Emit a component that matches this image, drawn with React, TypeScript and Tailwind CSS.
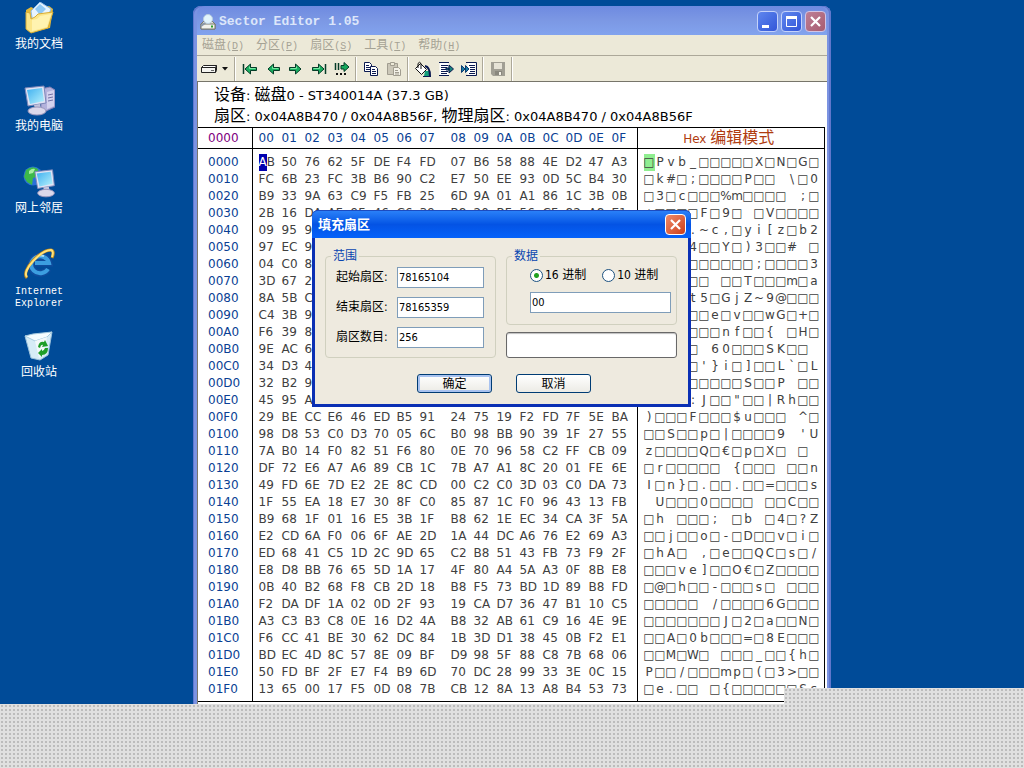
import { Fragment, type ReactNode } from "react";

const ROWS = [
  "AB 50 76 62 5F DE F4 FD 07 B6 58 88 4E D2 47 A3",
  "FC 6B 23 FC 3B B6 90 C2 E7 50 EE 93 0D 5C B4 30",
  "B9 33 9A 63 C9 F5 FB 25 6D 9A 01 A1 86 1C 3B 0B",
  "2B 16 DA AF 9F 46 C6 39 B8 20 BF 56 CF 82 A8 E1",
  "09 95 9E A1 2E 7E 63 2C F1 79 69 5B 7A E0 62 32",
  "97 EC 9B C4 34 B1 D3 59 E8 29 33 FA 92 23 20 C1",
  "04 C0 8D E2 F5 A6 C3 D8 B7 FE 3B A9 E4 C5 D1 33",
  "3D 67 26 B4 C8 A9 20 D6 F3 54 B7 DC E1 6D A5 61",
  "8A 5B C1 AE 74 35 B9 47 6A 5A 7E 39 40 F7 D5 B3",
  "C4 3B 9D E3 A2 C6 65 D8 76 F9 A4 77 47 B3 2B C9",
  "F6 39 8C D1 B5 E7 F2 6E 66 C8 A6 7B 20 D4 48 E9",
  "9E AC 6F B1 D7 20 36 30 C5 E8 A3 53 4B F6 B9 20",
  "34 D3 4E C2 A8 27 7D 69 E4 5D B7 F1 4C 60 C6 4C",
  "32 B2 9F A5 D9 E6 B3 C7 F8 53 A1 D4 50 20 E2 B6",
  "45 95 A3 C8 3A 4A D5 F7 22 B9 E1 7C 52 68 A4 D6",
  "29 BE CC E6 46 ED B5 91 24 75 19 F2 FD 7F 5E BA",
  "98 D8 53 C0 D3 70 05 6C B0 98 BB 90 39 1F 27 55",
  "7A B0 14 F0 82 51 F6 80 0E 70 96 58 C2 FF CB 09",
  "DF 72 E6 A7 A6 89 CB 1C 7B A7 A1 8C 20 01 FE 6E",
  "49 FD 6E 7D E2 2E 8C CD 00 C2 C0 3D 03 C0 DA 73",
  "1F 55 EA 18 E7 30 8F C0 85 87 1C F0 96 43 13 FB",
  "B9 68 1F 01 16 E5 3B 1F B8 62 1E EC 34 CA 3F 5A",
  "E2 CD 6A F0 06 6F AE 2D 1A 44 DC A6 76 E2 69 A3",
  "ED 68 41 C5 1D 2C 9D 65 C2 B8 51 43 FB 73 F9 2F",
  "E8 D8 BB 76 65 5D 1A 17 4F 80 A4 5A A3 0F 8B E8",
  "0B 40 B2 68 F8 CB 2D 18 B8 F5 73 BD 1D 89 B8 FD",
  "F2 DA DF 1A 02 0D 2F 93 19 CA D7 36 47 B1 10 C5",
  "A3 C3 B3 C8 0E 16 D2 4A B8 32 AB 61 C9 16 4E 9E",
  "F6 CC 41 BE 30 62 DC 84 1B 3D D1 38 45 0B F2 E1",
  "BD EC 4D 8C 57 8E 09 BF D9 98 5F 88 C8 7B 68 06",
  "50 FD BF 2F E7 F4 B9 6D 70 DC 28 99 33 3E 0C 15",
  "13 65 00 17 F5 0D 08 7B CB 12 8A 13 A8 B4 53 73",
];

// one text string per row, one character per byte
const TEXT = [
  "□Pvb_□□□□□X□N□G□",
  "□k#□;□□□□P□□ \\□0",
  "□3□c□□□%m□□□□ ;□",
  "+□□□□F□9□ □V□□□□",
  " □□□.~c,□yi[z□b2",
  "□□□□4□□Y□)3□□# □",
  "□□□□□□□□□□;□□□□3",
  "=g&□□□ □□T□□□m□a",
  "□[□□t5□GjZ~9@□□□",
  "□;□□□□e□v□□wG□+□",
  "□9□□□□□nf□□{ □H□",
  "□□o□□ 60□□□SK□□ ",
  "4□N□□'}i□]□□L`□L",
  "2□□□□□□□□S□□P □□",
  "E□□□:J□□\"□□|Rh□□",
  ")□□□F□□□$u□□□ ^□",
  "□□S□□p□|□□□□9 'U",
  "z□□□□Q□€□p□X□ □ ",
  "□r□□□□□ {□□□ □□n",
  "I□n}□.□□.□□=□□□s",
  " U□□□0□□□□ □□C□□",
  "□h □□□; □b □4□?Z",
  "□□j□□o□-□D□□v□i□",
  "□hA□ ,□e□□QC□s□/",
  "□□□ve]□□O€□Z□□□□",
  "□@□h□□-□□□s□ □□□",
  "□□□□□ /□□□□6G□□□",
  "□□□□□□□J□2□a□□N□",
  "□□A□0b□□□=□8E□□□",
  "□□M□W□ □□□_□□{h□",
  "P□□/□□□mp□(□3>□□",
  "□e.□□ □{□□□□□□Ss",
];

const COLUMNS = "00 01 02 03 04 05 06 07 08 09 0A 0B 0C 0D 0E 0F";

const MENUS = [
  ["磁盘", "D"],
  ["分区", "P"],
  ["扇区", "S"],
  ["工具", "T"],
  ["帮助", "H"],
];

function Bytes({ value, cursor = false }: { value: string; cursor?: boolean }) {
  const bytes = value.split(" ");
  return (
    <div className="flex gap-2">
      {[bytes.slice(0, 8), bytes.slice(8)].map((half, h) => (
        <div key={h} className="flex">
          {half.map((byte, i) => (
            <span key={i} className="w-[23px]">
              {cursor && h === 0 && i === 0 ? (
                <>
                  <span className="inline-block bg-[#0000b0] text-white">{byte[0]}</span>
                  {byte[1]}
                </>
              ) : (
                byte
              )}
            </span>
          ))}
        </div>
      ))}
    </div>
  );
}

function HexTable() {
  return (
    <div className="mr-[2px]">
      <table className="w-full table-fixed border-collapse border-b border-black text-xs leading-[17px]">
        <colgroup>
          <col className="w-[54px]" />
          <col className="w-[385px]" />
          <col />
        </colgroup>
        <thead>
          <tr className="h-[21px] border-y border-black text-[#0a3f94]">
            <th className="border-r border-black p-0 pl-[10px] text-left font-normal text-[#800080]">
              0000
            </th>
            <th className="border-r border-black p-0 pl-[6px] text-left font-normal">
              <Bytes value={COLUMNS} />
            </th>
            <th className="border-r border-black p-0 pr-1 text-center font-normal text-[#b03c10]">
              Hex <span className="text-base leading-[17px]">编辑模式</span>
            </th>
          </tr>
        </thead>
        <tbody className="text-[#404040]">
          {ROWS.map((row, r) => (
            <tr
              key={r}
              className="h-[17px] first:h-[22px] first:align-bottom last:h-[21px] last:align-top"
            >
              <th
                scope="row"
                className="border-r border-black p-0 pl-[10px] text-left align-[inherit] font-normal text-[#0a3f94]"
              >
                {(r * 16).toString(16).toUpperCase().padStart(4, "0")}
              </th>
              <td className="border-r border-black p-0 pl-[6px] align-[inherit]">
                <Bytes value={row} cursor={r === 0} />
              </td>
              <td className="border-r border-black p-0 pl-[6px] align-[inherit]">
                <div className="flex">
                  {[...TEXT[r]].map((char, i) => (
                    <span
                      key={i}
                      className={
                        r === 0 && i === 0
                          ? "flex w-[11px] justify-center bg-[#90ee90]"
                          : "flex w-[11px] justify-center"
                      }
                    >
                      {char}
                    </span>
                  ))}
                </div>
              </td>
            </tr>
          ))}
        </tbody>
      </table>
    </div>
  );
}

/* ---------- toolbar ---------- */

function Arrow({ bar, flip = false }: { bar?: boolean; flip?: boolean }) {
  return (
    <svg width="16" height="16" viewBox="0 0 16 16">
      <g transform={flip ? "translate(16 0) scale(-1 1)" : undefined}>
        <path d="M1.500 6.500h6V3l5.500 5-5.500 5V9.500h-6z" fill="#18b060" stroke="#053c28" />
        <path d="M2.500 7.500h6V5.500" fill="none" stroke="#7be8a4" />
        {bar && <path d="M14.500 3v10" stroke="#053c28" strokeWidth="1.500" />}
      </g>
    </svg>
  );
}

const driveIcon = (
  <svg width="18" height="12" viewBox="0 0 18 12">
    <path d="M1.500 4.500l2-2h13l-1 2z" fill="#fff" stroke="#222" />
    <path d="M1.500 4.500h14v5h-14z" fill="#f4f4f0" stroke="#222" />
    <path d="M15.500 9.500l1-2v-5" fill="none" stroke="#222" />
    <path d="M11 7.500h3" stroke="#666" />
  </svg>
);

const gotoIcon = (
  <svg width="16" height="16" viewBox="0 0 16 16">
    <path d="M1.500 2v7M4.500 2v7" stroke="#053c28" strokeWidth="1.500" />
    <path d="M7 4.500h3V1.500L15 6l-5 4.500V8H7z" fill="#18a85c" stroke="#053c28" />
    <path d="M2 13h2M6 13h2M10 13h2" stroke="#111" strokeWidth="2" />
  </svg>
);

const copyIcon = (
  <svg width="16" height="16" viewBox="0 0 16 16" stroke="#0b1a50">
    <path d="M1.500 1.500h5l2 2v7h-7z" fill="#fff" />
    <path d="M3 4.500h3M3 6.500h4M3 8.500h4" />
    <path d="M7.500 5.500h5l2 2v7h-7z" fill="#fff" />
    <path d="M9 8.500h3M9 10.500h4M9 12.500h4" />
  </svg>
);

const pasteIcon = (
  <svg width="16" height="16" viewBox="0 0 16 16" stroke="#a19d90">
    <path d="M1.500 2.500h10v11h-10z" fill="#cbc7b8" />
    <path d="M4.500 1.500h4v3h-4z" fill="#ece9d8" />
    <path d="M7.500 6.500h5l2 2v6h-7z" fill="#f4f2e8" />
    <path d="M9 9.500h3M9 11.500h4M9 13h4" />
  </svg>
);

const fillIcon = (
  <svg width="18" height="16" viewBox="0 0 18 16">
    <path d="M1.500 7.500l5-5 6 6-5 5z" fill="#fff" stroke="#111" />
    <path d="M4 7V2.500q1.500-2.500 3 0V8" fill="none" stroke="#111" />
    <path d="M11 10h4v5h-5z" fill="#16a07c" />
    <path d="M11 5q5 1 5 10" fill="none" stroke="#0b1a50" strokeWidth="2" />
    <path d="M9 15.500h8" stroke="#0b1a50" />
  </svg>
);

const exportIcon = (
  <svg width="16" height="16" viewBox="0 0 16 16">
    <path d="M1.500 1.500h9v13h-9z" fill="#fff" />
    <path
      d="M1 1.500h10M1 14.500h10M3 4.500h7M3 6.500h6M3 8.500h6M3 10.500h7M3 12.500h6"
      stroke="#0b1a50"
    />
    <path d="M11 4l4.500 4-4.500 4zM8 7h3v2H8z" fill="#16827c" stroke="#0b1a50" />
  </svg>
);

const importIcon = (
  <svg width="16" height="16" viewBox="0 0 16 16">
    <path d="M6.500 1.500h8v13h-8z" fill="#fff" />
    <path
      d="M5 1.500h10.500v13H5M8 4.500h6M9 6.500h5M9 8.500h5M9 10.500h5M8 12.500h6"
      fill="none"
      stroke="#0b1a50"
    />
    <path d="M.5 4.500L4 8l-3.500 3.500zM4.500 4.500L8 8l-3.500 3.500z" fill="#167aa0" stroke="#0b3a70" />
  </svg>
);

const saveIcon = (
  <svg width="16" height="16" viewBox="0 0 16 16">
    <path d="M1 1h14v14H3l-2-2z" fill="#a19f94" />
    <path d="M4 2h8v6H4z" fill="#e6e3d6" />
    <path d="M5 10h7v4H5z" fill="#8a887e" />
    <path d="M9 11h2v3H9z" fill="#f4f2e8" />
  </svg>
);

function ToolButton({ label, children }: { label: string; children: ReactNode }) {
  return (
    <button aria-label={label} className="flex h-6 w-[23px] items-center justify-center">
      {children}
    </button>
  );
}

function Separator() {
  return (
    <span className="mx-[2px] h-6 w-[2px] border-l border-r border-l-[#aca899] border-r-white" />
  );
}

function Toolbar() {
  return (
    <div className="flex h-[26px] items-center border-b border-[#77756a]">
      <button aria-label="选择磁盘" className="flex h-6 w-[35px] items-center gap-1 pl-[3px]">
        {driveIcon}
        <svg width="6" height="4" viewBox="0 0 6 4">
          <path d="M0 0h6L3 3.500z" fill="#111" />
        </svg>
      </button>
      <Separator />
      <ToolButton label="第一扇区"><Arrow bar flip /></ToolButton>
      <ToolButton label="上一扇区"><Arrow flip /></ToolButton>
      <ToolButton label="下一扇区"><Arrow /></ToolButton>
      <ToolButton label="最后扇区"><Arrow bar /></ToolButton>
      <ToolButton label="转到">{gotoIcon}</ToolButton>
      <Separator />
      <ToolButton label="复制">{copyIcon}</ToolButton>
      <ToolButton label="粘贴">{pasteIcon}</ToolButton>
      <Separator />
      <ToolButton label="填充">{fillIcon}</ToolButton>
      <ToolButton label="导出">{exportIcon}</ToolButton>
      <ToolButton label="导入">{importIcon}</ToolButton>
      <Separator />
      <ToolButton label="保存">{saveIcon}</ToolButton>
      <Separator />
    </div>
  );
}

/* ---------- editor window ---------- */

const CAPTION_BLUE =
  "h-[21px] w-[21px] rounded-sm border border-[#c4d2fa] bg-linear-to-br from-[#5f86ee] to-[#3355d8]";

const CJK = "text-base leading-5";

function EditorWindow() {
  return (
    <section className="absolute left-[193px] top-[6px] w-[638px] rounded-t-lg bg-[#7b93e2] px-[4px] pb-1 shadow-[inset_1px_1px_0_#6078d0,inset_-2px_0_0_#6077cc]">
      <header className="flex h-[29px] items-center rounded-t-lg bg-linear-to-b from-[#6e8ae0] via-[#7c98e4] to-[#82a3ee] pl-[2px] pt-[2px]">
        <svg width="18" height="18" viewBox="0 0 18 18">
          <path d="M2 11l3-3h8l3 3v5H2z" fill="#dcdcd4" stroke="#77786e" />
          <path d="M2 11h14v5H2z" fill="#f2f2ec" stroke="#77786e" />
          <circle cx="9" cy="6" r="4.500" fill="#e2f4fc" stroke="#b9cfe0" />
          <path d="M6 10l-4 3" stroke="#8a97a8" strokeWidth="2" />
          <path d="M12 13.500h2" stroke="#2aa02a" strokeWidth="2" />
        </svg>
        <h1 className="flex-1 pl-[2px] font-['Liberation_Mono',monospace] text-[13px] font-bold text-[#dce6fa]">
          Sector Editor 1.05
        </h1>
        <div className="flex gap-[3px] pr-[1px]">
          <button aria-label="最小化" className={CAPTION_BLUE}>
            <svg viewBox="0 0 19 19">
              <path d="M4 13h7v3H4z" fill="#fff" />
            </svg>
          </button>
          <button aria-label="最大化" className={CAPTION_BLUE}>
            <svg viewBox="0 0 19 19">
              <path d="M4.500 5v9.500h10V5" fill="none" stroke="#fff" />
              <path d="M4 4h11v3H4z" fill="#fff" />
            </svg>
          </button>
          <button
            aria-label="关闭"
            className="h-[21px] w-[21px] rounded-sm border border-[#d2c4e4] bg-linear-to-br from-[#bd7f96] to-[#a85c70]"
          >
            <svg viewBox="0 0 19 19">
              <path d="M5 5l9 9M14 5l-9 9" stroke="#fff" strokeWidth="2.200" />
            </svg>
          </button>
        </div>
      </header>
      <div className="bg-[#ece9d8]">
        <nav className="flex h-[21px] items-center gap-3 border-b border-[#aca899] pl-[5px] pt-[2px] font-['Liberation_Mono','Noto_Sans_CJK_SC',monospace] text-[#a5a294]">
          {MENUS.map(([name, key]) => (
            <button key={key} className="text-xs leading-5">
              {name}
              <span className="text-[10px]">
                (<u>{key}</u>)
              </span>
            </button>
          ))}
        </nav>
        <Toolbar />
      </div>
      <div className="border-l border-[#77756a] bg-white font-['DejaVu_Sans','Noto_Sans_CJK_SC',sans-serif] text-black">
        <div className="h-[45px] pl-[16px] pt-[3px] text-[13px] leading-5">
          <p>
            <span className={CJK}>设备</span>: <span className={CJK}>磁盘</span>0 - ST340014A (37.3
            GB)
          </p>
          <p>
            <span className={CJK}>扇区</span>: 0x04A8B470 / 0x04A8B56F,{" "}
            <span className={CJK}>物理扇区</span>: 0x04A8B470 / 0x04A8B56F
          </p>
        </div>
        <HexTable />
        <div className="h-6" />
      </div>
    </section>
  );
}

/* ---------- fill dialog ---------- */

const RANGE = [
  { id: "start", label: "起始扇区:", value: "78165104" },
  { id: "end", label: "结束扇区:", value: "78165359" },
  { id: "count", label: "扇区数目:", value: "256" },
];

const INPUT =
  "h-[21px] border border-[#7f9db9] bg-white pl-[1px] text-[11px] leading-4 outline-none";
const RADIO =
  "h-[13px] w-[13px] appearance-none rounded-full border border-[#1c5180] bg-white checked:bg-[radial-gradient(#21a121_0_2px,#fff_3px)]";
const BUTTON =
  "h-[19px] w-[75px] rounded-[3px] border border-[#003c74] bg-linear-to-b from-white to-[#ecebe5] text-xs leading-4";

function FillDialog() {
  return (
    <div
      role="dialog"
      aria-label="填充扇区"
      className="absolute left-[312px] top-[210px] w-[379px] rounded-t-md bg-[#0a2fb4] px-[3px] pb-[3px] font-['DejaVu_Sans_Condensed','Noto_Sans_CJK_SC',sans-serif] text-xs text-black"
    >
      <header className="-mx-[3px] flex h-7 items-center justify-between rounded-t-md border-t border-[#1c4bc0] bg-linear-to-b from-[#2a80f8] via-[#0453e4] to-[#0562fa] pl-[6px] pr-[5px]">
        <h2 className="text-[13px] font-bold text-white">填充扇区</h2>
        <button
          aria-label="关闭对话框"
          className="h-[21px] w-[21px] rounded-sm border border-white bg-linear-to-br from-[#ee8a68] to-[#cc3c14]"
        >
          <svg viewBox="0 0 19 19">
            <path d="M5 5l9 9M14 5l-9 9" stroke="#fff" strokeWidth="2.200" />
          </svg>
        </button>
      </header>
      <form
        className="bg-[#eeeadf] pb-[11px] pl-[10px] pr-[11px] pt-[10px]"
        onSubmit={(e) => e.preventDefault()}
      >
        <div className="grid grid-cols-2 gap-[10px]">
          <fieldset className="h-[110px] rounded border border-[#d0d0bf] px-[10px]">
            <legend className="-ml-[5px] px-[2px] leading-4 text-[#0a46b0]">范围</legend>
            <div className="grid grid-cols-[61px_87px] gap-y-[9px] pt-[3px]">
              {RANGE.map((field) => (
                <Fragment key={field.id}>
                  <label htmlFor={field.id} className="leading-[21px]">
                    {field.label}
                  </label>
                  <input id={field.id} defaultValue={field.value} className={INPUT} />
                </Fragment>
              ))}
            </div>
          </fieldset>
          <div className="flex flex-col justify-between">
            <fieldset className="h-[77px] rounded border border-[#d0d0bf] pl-[23px] pr-[5px]">
              <legend className="-ml-[18px] px-[2px] leading-4 text-[#0a46b0]">数据</legend>
              <div className="flex gap-4 pt-[3px] leading-4">
                <label className="flex items-center gap-[2px]">
                  <input type="radio" name="base" defaultChecked className={RADIO} />
                  16 进制
                </label>
                <label className="flex items-center gap-[2px]">
                  <input type="radio" name="base" className={RADIO} />
                  10 进制
                </label>
              </div>
              <input aria-label="数据" defaultValue="00" className={`${INPUT} mt-[9px] w-full`} />
            </fieldset>
            <div
              role="progressbar"
              aria-label="进度"
              className="h-[26px] rounded-[3px] border border-[#686868] bg-white shadow-[inset_0_1px_1px_#bebebe]"
            />
          </div>
        </div>
        <div className="flex justify-center gap-6 pl-[6px] pt-4">
          <button className={`${BUTTON} shadow-[inset_0_0_0_2px_#a9c3f0]`}>确定</button>
          <button className={BUTTON}>取消</button>
        </div>
      </form>
    </div>
  );
}

/* ---------- desktop ---------- */

const screen = (
  <>
    <path d="M2 4l19-2 2 17-18 3z" fill="#dfe3f4" stroke="#7d86b8" />
    <path d="M4 6l15-2 2 13-14 3z" fill="url(#lcd)" />
    <path d="M11 21l6-1 1 5h-6z" fill="#c4c4dc" />
    <ellipse cx="14" cy="27" rx="9" ry="4" fill="#dcd8ea" stroke="#9b97bd" />
  </>
);

const SHORTCUTS = [
  {
    name: "我的文档",
    icon: (
      <svg width="32" height="32" viewBox="0 0 32 32">
        <path d="M3 8l5-3 4 2 14-3 4 3-3 19-18 4-6-4z" fill="#e3b93a" />
        <path d="M8 9l9-9 11 7-5 12-13 3z" fill="#e8f4ff" stroke="#8ebbe6" />
        <path d="M12 7l5-5 6 5-6 6z" fill="#8fc8f4" />
        <path d="M3 10l4 1 1 6 4-2 3-3 15-2-5 16-17 5-5-4z" fill="#fbe68a" stroke="#d9ad35" />
        <path d="M9 18l5-1 3-3 11-2-4 13-15 4z" fill="#fff3b0" />
      </svg>
    ),
  },
  {
    name: "我的电脑",
    icon: (
      <svg width="32" height="32" viewBox="0 0 32 32">
        <defs>
          <linearGradient id="lcd" x2="1" y2="1">
            <stop stopColor="#3fb0f0" />
            <stop offset="1" stopColor="#b8f2fc" />
          </linearGradient>
        </defs>
        <path d="M18 5l9-2 5 3v17l-9 4-5-2z" fill="#b4b2dc" stroke="#8280b4" />
        <path d="M24 8l7-2v16l-7 3z" fill="#d4d2ee" />
        <path d="M25 11l5-1M25 14l5-1M25 17l5-1" stroke="#7270a4" />
        {screen}
      </svg>
    ),
  },
  {
    name: "网上邻居",
    icon: (
      <svg width="32" height="32" viewBox="0 0 32 32">
        <circle cx="10" cy="10" r="9.500" fill="#2a70d8" />
        <path d="M3 4q6-5 12-1l1 7-6 2-1 7-5-3-3-5z" fill="#3cb84a" />
        <path d="M6 5q3-3 6-2l-2 4-4 1z" fill="#a6eea0" />
        <g transform="translate(10 2) scale(.93)">{screen}</g>
      </svg>
    ),
  },
  {
    name: "Internet Explorer",
    icon: (
      <svg width="32" height="32" viewBox="0 0 32 32" fill="none">
        <path d="M25 21a9 8.500 0 1 1 1-6H12" stroke="#0f4c9c" strokeWidth="7" />
        <path d="M25 21a9 8.500 0 1 1 1-6H12" stroke="#3c9ee0" strokeWidth="4" />
        <path d="M10 12q4-6 11-4" stroke="#a4e0fa" strokeWidth="2" />
        <path d="M4 30C-3 23 18 1 28 2q4 1 1 8" stroke="#c08a1c" strokeWidth="3" />
        <path d="M4 29C-2 23 18 2 28 2q3 1 1 7" stroke="#ffe27a" strokeWidth="2" />
      </svg>
    ),
  },
  {
    name: "回收站",
    icon: (
      <svg width="32" height="32" viewBox="0 0 32 32">
        <path d="M2 6l9 2 18-6-4 23-8 5-9-2z" fill="#d6ecf6" stroke="#9cc2dc" />
        <path d="M2 6l8-2 19-2-5 5-12 4z" fill="#f6fdff" stroke="#a8cce0" />
        <path d="M12 11l12-4-3 17-5 4z" fill="#f2f8fa" />
        <path d="M15 17q1-6 6-5l1-2 3 6-6 1 1-2q-2-1-3 3z" fill="#1e9e28" />
        <path d="M25 18q0 7-6 7v2l-4-4 4-4v2q2 0 3-3z" fill="#1e9e28" />
      </svg>
    ),
  },
];

const DITHER =
  "bg-[#e0e0e0] bg-[radial-gradient(#bcbcbc_1px,transparent_1px)] bg-[size:4px_4px]";

export default function App() {
  return (
    <main className="relative h-screen overflow-hidden bg-[#004b98] font-['Liberation_Sans','Noto_Sans_CJK_SC',sans-serif]">
      <ul className="grid w-[78px] auto-rows-[82px] pt-[2px]">
        {SHORTCUTS.map(({ name, icon }) => (
          <li key={name}>
            <a href="#" className="flex flex-col items-center gap-[2px] text-center text-white">
              {icon}
              {name.includes(" ") ? (
                <span className="w-14 pt-1 font-['Liberation_Mono',monospace] text-[10px] leading-3">
                  {name}
                </span>
              ) : (
                <span className="text-xs leading-4">{name}</span>
              )}
            </a>
          </li>
        ))}
      </ul>
      <EditorWindow />
      <FillDialog />
      <div className={`absolute inset-x-0 bottom-0 h-16 ${DITHER}`} />
      <div className={`absolute bottom-16 right-0 h-4 w-60 ${DITHER}`} />
    </main>
  );
}
